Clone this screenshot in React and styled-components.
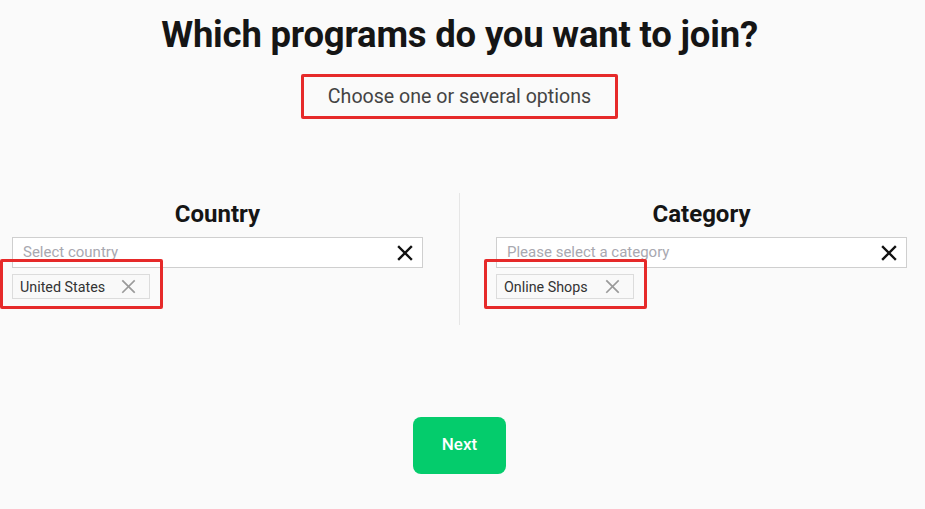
import React from 'react';
import styled, { createGlobalStyle } from 'styled-components';

const GlobalStyle = createGlobalStyle`
  html, body {
    margin: 0;
    padding: 0;
    background: #fafafa;
  }
  body {
    font-family: Roboto, "Liberation Sans", sans-serif;
    color: #1a1a1a;
  }
`;

const Page = styled.div`
  width: 925px;
  height: 509px;
  box-sizing: border-box;
  padding: 15px 18px 0 12px;
  display: flex;
  flex-direction: column;
  align-items: center;
`;

const Title = styled.h1`
  margin: 0;
  font-size: 36.5px;
  line-height: 40px;
  font-weight: 700;
  color: #151515;
  letter-spacing: -0.2px;
`;

const Annotated = styled.div`
  position: relative;
`;

const Mark = styled.div`
  position: absolute;
  top: ${p => p.$top}px;
  bottom: ${p => p.$bottom}px;
  left: ${p => p.$left}px;
  right: ${p => p.$right}px;
  border: 3px solid #e62a2a;
  border-radius: 2px;
  pointer-events: none;
`;

const Subtitle = styled.div`
  margin-top: 19px;
  width: 317px;
  height: 45px;
  box-sizing: border-box;
  display: flex;
  align-items: center;
  justify-content: center;
  font-size: 19.6px;
  color: #444;
  border: 3px solid #e62a2a;
  border-radius: 2px;
`;

const Columns = styled.div`
  align-self: stretch;
  margin-top: 74px;
  display: grid;
  grid-template-columns: 1fr 1px 1fr;
  column-gap: 36px;
`;

const Divider = styled.div`
  background: #e6e6e6;
  width: 1px;
`;

const Column = styled.div`
  padding: 8px 0 26px;
  display: flex;
  flex-direction: column;
  align-items: flex-start;
`;

const Heading = styled.h2`
  align-self: stretch;
  margin: 0;
  text-align: center;
  font-size: 24px;
  line-height: 27px;
  font-weight: 700;
  color: #151515;
`;

const Select = styled.div`
  align-self: stretch;
  margin-top: 9px;
  height: 31px;
  box-sizing: border-box;
  background: #fff;
  border: 1px solid #cfcfcf;
  display: flex;
  align-items: center;
  padding: 0 9px 0 10px;
`;

const Placeholder = styled.span`
  flex: 1;
  font-size: 15px;
  color: #a8a8b0;
  margin-top: -2px;
`;

const Chip = styled.div`
  margin-top: 6px;
  width: 138px;
  height: 25px;
  box-sizing: border-box;
  border: 1px solid #dcdcdc;
  background: #f9f9f9;
  display: flex;
  align-items: center;
  justify-content: space-between;
  padding: 0 13px 0 7px;
  font-size: 14.3px;
  color: #333;
`;

const Cross = ({ size, color, width }) => (
  <svg width={size} height={size} viewBox="0 0 16 16" fill="none">
    <path d="M2 2L14 14M14 2L2 14" stroke={color} strokeWidth={width} strokeLinecap="square" />
  </svg>
);

const NextButton = styled.button`
  margin-top: 92px;
  width: 93px;
  height: 57px;
  border: none;
  border-radius: 8px;
  background: #04cc6c;
  color: #fff;
  font-family: Roboto, "Liberation Sans", sans-serif;
  font-size: 17px;
  font-weight: 500;
  padding: 0 0 4px;
`;

const Picker = ({ title, placeholder, value }) => (
  <Column>
    <Heading>{title}</Heading>
    <Select>
      <Placeholder>{placeholder}</Placeholder>
      <Cross size={16} color="#111" width={2.4} />
    </Select>
    <Annotated>
      <Chip>
        {value}
        <Cross size={15} color="#9a9a9a" width={1.8} />
      </Chip>
      <Mark $top={-9} $bottom={-10} $left={-12} $right={-13} />
    </Annotated>
  </Column>
);

export default function App() {
  return (
    <Page>
      <GlobalStyle />
      <Title>Which programs do you want to join?</Title>
      <Subtitle>Choose one or several options</Subtitle>
      <Columns>
        <Picker title="Country" placeholder="Select country" value="United States" />
        <Divider />
        <Picker title="Category" placeholder="Please select a category" value="Online Shops" />
      </Columns>
      <NextButton>Next</NextButton>
    </Page>
  );
}
